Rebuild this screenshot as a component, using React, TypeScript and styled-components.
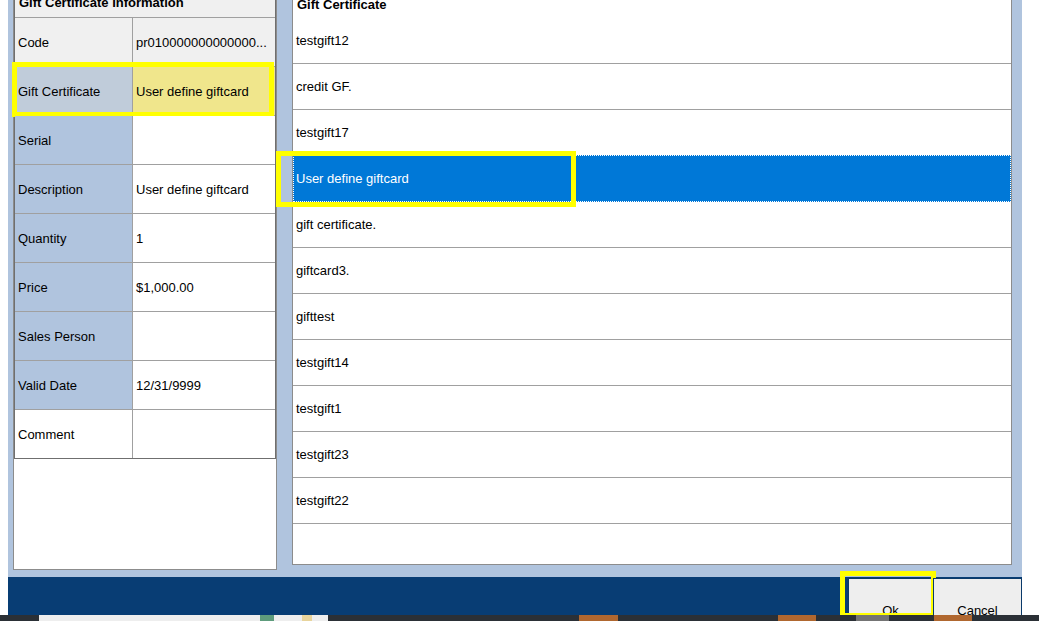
import styled, { createGlobalStyle } from "styled-components";

const GlobalStyle = createGlobalStyle`
  html, body {
    margin: 0;
    padding: 0;
    height: 100%;
    overflow: hidden;
    background: #ffffff;
  }
  body {
    font-family: "Liberation Sans", Arial, sans-serif;
    font-size: 13px;
    color: #000000;
  }
`;

type Tone = "plain" | "code" | "picked" | "blank";

const infoRows: { label: string; value: string; tone: Tone }[] = [
  { label: "Code", value: "pr010000000000000...", tone: "code" },
  { label: "Gift Certificate", value: "User define giftcard", tone: "picked" },
  { label: "Serial", value: "", tone: "plain" },
  { label: "Description", value: "User define giftcard", tone: "plain" },
  { label: "Quantity", value: "1", tone: "plain" },
  { label: "Price", value: "$1,000.00", tone: "plain" },
  { label: "Sales Person", value: "", tone: "plain" },
  { label: "Valid Date", value: "12/31/9999", tone: "plain" },
  { label: "Comment", value: "", tone: "blank" },
];

const certificates = [
  "testgift12",
  "credit GF.",
  "testgift17",
  "User define giftcard",
  "gift certificate.",
  "giftcard3.",
  "gifttest",
  "testgift14",
  "testgift1",
  "testgift23",
  "testgift22",
];

const selected = "User define giftcard";

// taskbar strip at the very bottom (width, colour)
const taskbar: [number, string][] = [
  [39, "#2b3036"],
  [221, "#eeeeee"],
  [14, "#5e9c7c"],
  [28, "#eeeeee"],
  [10, "#e8d49c"],
  [16, "#eeeeee"],
  [251, "#2b3036"],
  [39, "#b0672f"],
  [160, "#2b3036"],
  [38, "#b0672f"],
  [40, "#2b3036"],
  [33, "#747474"],
  [45, "#2b3036"],
  [38, "#b0672f"],
  [67, "#2b3036"],
];

const labelBg: Record<Tone, string> = {
  plain: "#b0c4de",
  code: "#f0f0f0",
  picked: "#c0ccda",
  blank: "#ffffff",
};

const valueBg: Record<Tone, string> = {
  plain: "#ffffff",
  code: "#f0f0f0",
  picked: "#f0e68c",
  blank: "#ffffff",
};

const App = () => {
  return (
    <>
      <GlobalStyle />
      <Window>
        <Content>
          <InfoPanel>
            <InfoTable>
              <InfoHeader>Gift Certificate Information</InfoHeader>
              {infoRows.map((row) => (
                <InfoRow key={row.label}>
                  <Label $tone={row.tone}>{row.label}</Label>
                  <Value $tone={row.tone}>{row.value}</Value>
                  {row.tone === "picked" && <InfoMark />}
                </InfoRow>
              ))}
            </InfoTable>
          </InfoPanel>
          <ListPanel>
            <ListHeader>Gift Certificate</ListHeader>
            {certificates.map((name) =>
              name === selected ? (
                <SelectedItem key={name}>
                  {name}
                  <ListMark />
                </SelectedItem>
              ) : (
                <ListItem key={name}>{name}</ListItem>
              )
            )}
          </ListPanel>
        </Content>
        <Footer>
          <FooterButton $w={85}>
            Ok
            <ButtonMark />
          </FooterButton>
          <FooterButton $w={89}>Cancel</FooterButton>
        </Footer>
      </Window>
      <Taskbar>
        {taskbar.map(([w, c], i) => (
          <TaskSegment key={i} $w={w} $c={c} />
        ))}
      </Taskbar>
    </>
  );
};

const Window = styled.div`
  margin-left: 8px;
  width: 1014px;
  background: #b0c4de;
  display: flex;
  flex-direction: column;
`;

const Content = styled.div`
  display: flex;
  align-items: flex-start;
  gap: 15px;
  padding: 0 10px 0 5px;
  height: 577px;
`;

const InfoPanel = styled.div`
  width: 264px;
  height: 570px;
  box-sizing: border-box;
  border: 1px solid #8c8c8c;
  border-top: none;
  background: #ffffff;
`;

const InfoTable = styled.div`
  border: 1px solid #6f6f6f;
  border-top: none;
`;

const InfoHeader = styled.div`
  height: 17px;
  line-height: 5px;
  padding-left: 4px;
  background: #f0f0f0;
  font-weight: bold;
  white-space: nowrap;
  border-bottom: 1px solid #a0a0a0;
`;

const InfoRow = styled.div`
  position: relative;
  display: grid;
  grid-template-columns: 118px 1fr;
  height: 49px;
  box-sizing: border-box;
  border-bottom: 1px solid #a0a0a0;
  &:last-child {
    height: 48px;
    border-bottom: none;
  }
`;

const Label = styled.div<{ $tone: Tone }>`
  display: flex;
  align-items: center;
  padding-left: 3px;
  background: ${(p) => labelBg[p.$tone]};
  border-right: 1px solid #a0a0a0;
  white-space: nowrap;
`;

const Value = styled.div<{ $tone: Tone }>`
  display: flex;
  align-items: center;
  padding-left: 3px;
  background: ${(p) => valueBg[p.$tone]};
  white-space: nowrap;
  overflow: hidden;
`;

const ListPanel = styled.div`
  width: 720px;
  height: 565px;
  box-sizing: border-box;
  border: 1px solid #8c8c8c;
  border-top: none;
  background: #ffffff;
`;

const ListHeader = styled.div`
  height: 18px;
  line-height: 10px;
  padding-left: 4px;
  font-weight: bold;
`;

const ListItem = styled.div`
  display: flex;
  align-items: center;
  height: 46px;
  box-sizing: border-box;
  padding-left: 3px;
  border-bottom: 1px solid #a0a0a0;
`;

const SelectedItem = styled.div`
  position: relative;
  display: flex;
  align-items: center;
  height: 47px;
  margin-top: -1px;
  box-sizing: border-box;
  padding-left: 2px;
  background: #0078d7;
  color: #ffffff;
  border: 1px dotted #ffffff;
`;

const Footer = styled.div`
  display: flex;
  justify-content: flex-end;
  height: 64px;
  padding-top: 1px;
  background: #083d74;
`;

const FooterButton = styled.button<{ $w: number }>`
  position: relative;
  width: ${(p) => p.$w}px;
  height: 64px;
  padding: 0;
  background: #eeeeee;
  border: 1px solid #0a3a6a;
  font-family: "Liberation Sans", Arial, sans-serif;
  font-size: 13px;
  color: #000000;
`;

const Mark = styled.span`
  position: absolute;
  box-sizing: border-box;
  border: 5px solid #ffff00;
  pointer-events: none;
`;

const InfoMark = styled(Mark)`
  left: -3px;
  top: -5px;
  width: 262px;
  height: 55px;
`;

const ListMark = styled(Mark)`
  left: -18px;
  top: -5px;
  width: 300px;
  height: 56px;
`;

const ButtonMark = styled(Mark)`
  left: -9px;
  top: -8px;
  width: 96px;
  height: 47px;
`;

const Taskbar = styled.div`
  position: fixed;
  left: 0;
  right: 0;
  bottom: 0;
  height: 6px;
  display: flex;
  background: #2b3036;
`;

const TaskSegment = styled.span<{ $w: number; $c: string }>`
  flex: none;
  width: ${(p) => p.$w}px;
  background: ${(p) => p.$c};
`;

export default App;
